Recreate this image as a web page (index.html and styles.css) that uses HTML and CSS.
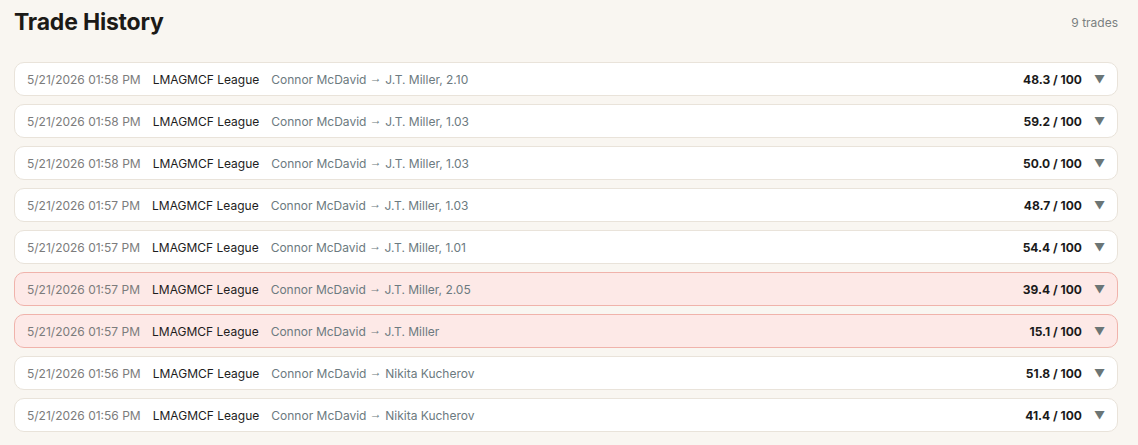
FILE: index.html
```html
<!DOCTYPE html>
<html>
<head>
<meta charset="utf-8">
<link rel="stylesheet" href="styles.css">
</head>
<body>
<div class="page">
  <div class="header">
    <h1 class="title">Trade History</h1>
    <span class="count">9 trades</span>
  </div>
  <div class="list">
    <div class="row"><span class="date">5/21/2026 01:58 PM</span><span class="league">LMAGMCF League</span><span class="trade">Connor McDavid <span class="arrow">→</span> J.T. Miller, 2.10</span><span class="score">48.3 / 100</span><span class="caret">▼</span></div>
    <div class="row"><span class="date">5/21/2026 01:58 PM</span><span class="league">LMAGMCF League</span><span class="trade">Connor McDavid <span class="arrow">→</span> J.T. Miller, 1.03</span><span class="score">59.2 / 100</span><span class="caret">▼</span></div>
    <div class="row"><span class="date">5/21/2026 01:58 PM</span><span class="league">LMAGMCF League</span><span class="trade">Connor McDavid <span class="arrow">→</span> J.T. Miller, 1.03</span><span class="score">50.0 / 100</span><span class="caret">▼</span></div>
    <div class="row"><span class="date">5/21/2026 01:57 PM</span><span class="league">LMAGMCF League</span><span class="trade">Connor McDavid <span class="arrow">→</span> J.T. Miller, 1.03</span><span class="score">48.7 / 100</span><span class="caret">▼</span></div>
    <div class="row"><span class="date">5/21/2026 01:57 PM</span><span class="league">LMAGMCF League</span><span class="trade">Connor McDavid <span class="arrow">→</span> J.T. Miller, 1.01</span><span class="score">54.4 / 100</span><span class="caret">▼</span></div>
    <div class="row bad"><span class="date">5/21/2026 01:57 PM</span><span class="league">LMAGMCF League</span><span class="trade">Connor McDavid <span class="arrow">→</span> J.T. Miller, 2.05</span><span class="score">39.4 / 100</span><span class="caret">▼</span></div>
    <div class="row bad"><span class="date">5/21/2026 01:57 PM</span><span class="league">LMAGMCF League</span><span class="trade">Connor McDavid <span class="arrow">→</span> J.T. Miller</span><span class="score">15.1 / 100</span><span class="caret">▼</span></div>
    <div class="row"><span class="date">5/21/2026 01:56 PM</span><span class="league">LMAGMCF League</span><span class="trade">Connor McDavid <span class="arrow">→</span> Nikita Kucherov</span><span class="score">51.8 / 100</span><span class="caret">▼</span></div>
    <div class="row"><span class="date">5/21/2026 01:56 PM</span><span class="league">LMAGMCF League</span><span class="trade">Connor McDavid <span class="arrow">→</span> Nikita Kucherov</span><span class="score">41.4 / 100</span><span class="caret">▼</span></div>
  </div>
</div>
</body>
</html>
```
FILE: styles.css
```css
html, body {
  margin: 0;
  padding: 0;
  background: #f9f6f1;
  font-family: Inter, "Liberation Sans", sans-serif;
}
.page {
  padding: 6px 20px 0 14px;
}
.header {
  display: flex;
  justify-content: space-between;
  align-items: center;
  height: 32px;
  margin-bottom: 24px;
}
.title {
  margin: 0;
  font-size: 23px;
  font-weight: 700;
  color: #1c1a17;
  letter-spacing: -0.2px;
}
.count {
  font-size: 12px;
  color: #7a7f80;
}
.list {
  display: flex;
  flex-direction: column;
  gap: 8px;
}
.row {
  display: flex;
  align-items: center;
  height: 32px;
  padding: 0 12px;
  background: #ffffff;
  border: 1px solid #e9e3da;
  border-radius: 10px;
  font-size: 12px;
  gap: 12px;
}
.row.bad {
  background: #fde9e7;
  border-color: #f0b3ab;
}
.date {
  color: #7c7c7c;
}
.league {
  color: #1d1d1d;
}
.trade {
  color: #6c7a80;
  flex: 1;
}
.arrow {
  font-family: "Liberation Sans", sans-serif;
  line-height: 0;
  vertical-align: 2px;
}
.score {
  font-weight: 700;
  color: #1a1a1a;
}
.caret {
  color: #6b7575;
  font-size: 11px;
  margin: 0;
}
```
